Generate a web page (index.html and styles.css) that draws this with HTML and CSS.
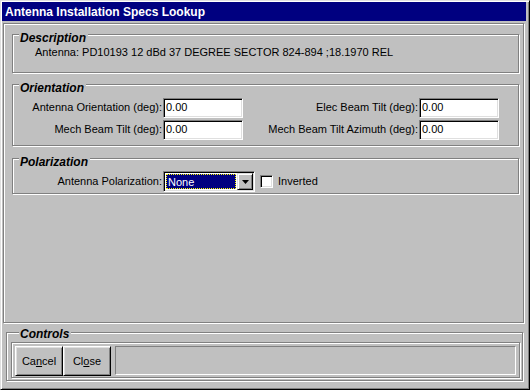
FILE: index.html
```html
<!DOCTYPE html>
<html lang="en">

<head>
    <meta charset="UTF-8">
    <title>Antenna Installation Specs Lookup</title>
    <link rel="stylesheet" href="styles.css">
</head>

<body>
    <div class="window">
        <div class="titlebar">Antenna Installation Specs Lookup</div>
        <div class="client">
            <div class="panel etched">
                <div class="group etched group-desc">
                    <div class="group-title">Description</div>
                    <div class="desc-text">Antenna: PD10193 12 dBd 37 DEGREE SECTOR 824-894 ;18.1970 REL</div>
                </div>
                <div class="group etched group-orient">
                    <div class="group-title">Orientation</div>
                    <div class="field-grid">
                        <label for="orient">Antenna Orientation (deg):</label>
                        <input class="textbox" id="orient" value="0.00">
                        <label for="elecTilt">Elec Beam Tilt (deg):</label>
                        <input class="textbox" id="elecTilt" value="0.00">
                        <label for="mechTilt">Mech Beam Tilt (deg):</label>
                        <input class="textbox" id="mechTilt" value="0.00">
                        <label for="mechAz">Mech Beam Tilt Azimuth (deg):</label>
                        <input class="textbox" id="mechAz" value="0.00">
                    </div>
                </div>
                <div class="group etched group-polar">
                    <div class="group-title">Polarization</div>
                    <div class="polar-row">
                        <label class="polar-label">Antenna Polarization:</label>
                        <div class="combo">
                            <div class="combo-value"><span class="combo-focus">None</span></div>
                            <div class="combo-btn">
                                <svg width="7" height="4" viewBox="0 0 7 4"><polygon points="0,0 7,0 3.5,4" fill="#000"/></svg>
                            </div>
                        </div>
                        <input type="checkbox" class="checkbox" id="inverted">
                        <label for="inverted" class="check-label">Inverted</label>
                    </div>
                </div>
            </div>
            <div class="group etched group-controls">
                <div class="group-title">Controls</div>
                <div class="controls-bar etched">
                    <button class="btn">Ca<u>n</u>cel</button>
                    <button class="btn">Cl<u>o</u>se</button>
                    <div class="status"></div>
                </div>
            </div>
        </div>
    </div>
</body>

</html>
```

FILE: styles.css
```css
body {
    margin: 0;
    background-color: #c0c0c0;
    font-family: "Liberation Sans", Arial, sans-serif;
    font-size: 11px;
    color: #000;
}

.window {
    width: 530px;
    height: 390px;
    box-sizing: border-box;
    border: 1px solid;
    border-color: #dfdfdf #000 #000 #dfdfdf;
    box-shadow: inset 1px 1px #fff, inset -1px -1px #808080;
    padding: 1px;
    display: flex;
    flex-direction: column;
}

.titlebar {
    height: 19px;
    box-sizing: border-box;
    padding: 2px 0 0 3px;
    margin-right: 2px;
    line-height: 17px;
    background-color: #000080;
    color: #fff;
    font-weight: bold;
    font-size: 12px;
}

.client {
    flex: 1;
    padding: 2px 0 0 1px;
}

/* gray line with a white line beside it */
.etched {
    border: 1px solid #808080;
    box-shadow: inset 1px 1px #fff, 1px 1px #fff;
}

.panel {
    width: 521px;
    height: 300px;
    box-sizing: border-box;
    padding: 10px 4px 0 8px;
}

.group-title {
    width: max-content;
    margin: -3px 0 0 6px;
    padding: 0 2px 0 1px;
    line-height: 13px;
    background-color: #c0c0c0;
    font-style: italic;
    font-weight: bold;
    font-size: 12px;
}

.group-desc {
    padding-bottom: 13px;
}

.desc-text {
    margin-top: 1px;
    padding-left: 22px;
    line-height: 13px;
}

.group-orient {
    margin-top: 11px;
    padding-bottom: 5px;
}

.field-grid {
    display: grid;
    grid-template-columns: 150px 80px 176px 80px;
    row-gap: 2px;
    margin-top: 3px;
    align-items: start;
}

.field-grid label {
    text-align: right;
    padding-right: 1px;
    line-height: 18px;
    white-space: nowrap;
}

.textbox {
    width: 80px;
    height: 20px;
    box-sizing: border-box;
    margin: 0;
    padding: 0 0 2px 2px;
    border: 1px solid;
    border-color: #808080 #fff #fff #808080;
    box-shadow: inset 1px 1px #000, inset -1px -1px #dfdfdf;
    background-color: #fff;
    font-family: "Liberation Sans", Arial, sans-serif;
    font-size: 11px;
    outline: none;
}

.group-polar {
    margin-top: 12px;
    padding-bottom: 1px;
}

.polar-row {
    display: flex;
    align-items: center;
    margin-top: 2px;
    height: 21px;
}

.polar-label {
    width: 150px;
    text-align: right;
    padding-right: 1px;
    box-sizing: border-box;
    line-height: 19px;
}

.combo {
    width: 92px;
    height: 21px;
    box-sizing: border-box;
    border: 1px solid;
    border-color: #808080 #fff #fff #808080;
    box-shadow: inset 1px 1px #000, inset -1px -1px #dfdfdf;
    background-color: #fff;
    padding: 1px;
    display: flex;
}

.combo-value {
    flex: 1;
    padding: 1px;
    display: flex;
}

.combo-focus {
    flex: 1;
    background-color: #000080;
    color: #fff;
    border: 1px dotted #ffff00;
    padding-left: 1px;
    line-height: 14px;
}

.combo-btn {
    width: 16px;
    box-sizing: border-box;
    border: 1px solid;
    border-color: #dfdfdf #000 #000 #dfdfdf;
    box-shadow: inset 1px 1px #fff, inset -1px -1px #808080;
    background-color: #c0c0c0;
    display: flex;
    align-items: center;
    justify-content: center;
}

.checkbox {
    -webkit-appearance: none;
    appearance: none;
    width: 13px;
    height: 13px;
    box-sizing: border-box;
    margin: 0 0 0 5px;
    border: 1px solid;
    border-color: #808080 #fff #fff #808080;
    box-shadow: inset 1px 1px #000, inset -1px -1px #dfdfdf;
    background-color: #fff;
}

.check-label {
    margin-left: 5px;
    line-height: 19px;
}

.group-controls {
    width: 517px;
    height: 49px;
    box-sizing: border-box;
    margin: 9px 0 0 3px;
    padding: 0 2px 0 4px;
}

.group-controls .group-title {
    margin: -5px 0 0 8px;
}

.controls-bar {
    height: 36px;
    box-sizing: border-box;
    margin-top: 1px;
    padding: 3px;
    display: flex;
    align-items: flex-start;
}

.btn {
    width: 48px;
    height: 30px;
    box-sizing: border-box;
    margin: 0;
    padding: 0;
    border: 1px solid;
    border-color: #fff #000 #000 #fff;
    box-shadow: inset 1px 1px #dfdfdf, inset -1px -1px #808080;
    background-color: #c0c0c0;
    font-family: "Liberation Sans", Arial, sans-serif;
    font-size: 11px;
    color: #000;
}

.status {
    flex: 1;
    height: 29px;
    margin-left: 4px;
    box-sizing: border-box;
    border: 1px solid;
    border-color: #808080 #fff #fff #808080;
}
```
